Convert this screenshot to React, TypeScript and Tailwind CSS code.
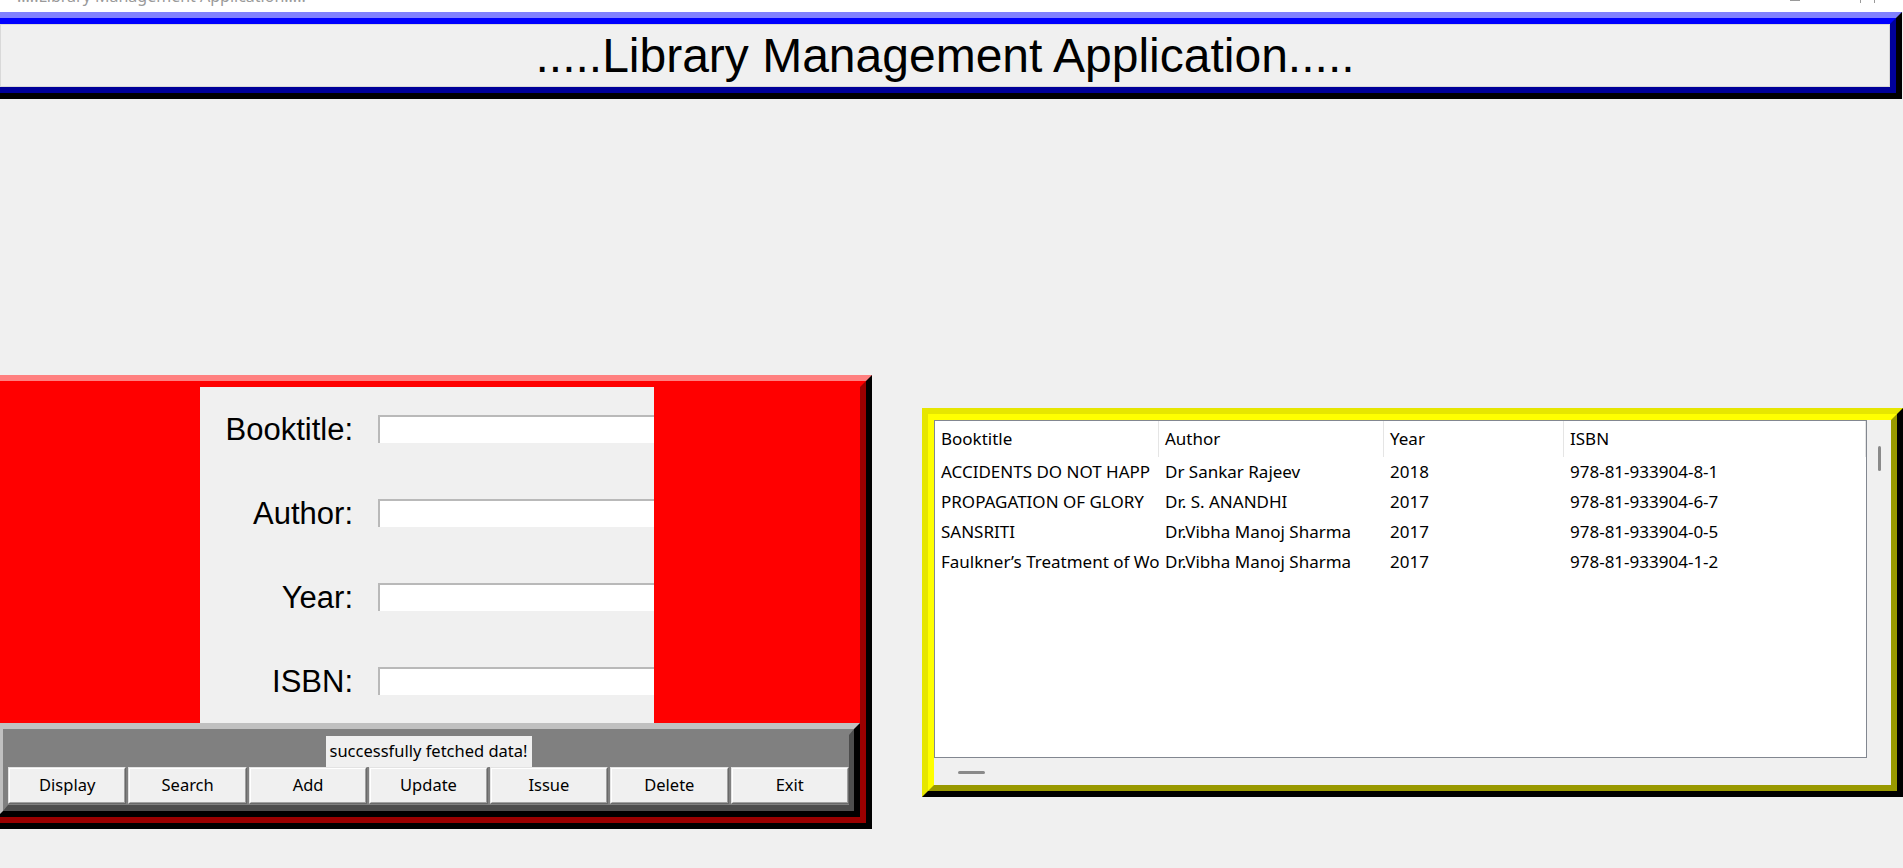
import React from 'react';

const fields = ['Booktitle:', 'Author:', 'Year:', 'ISBN:'];

const actions = ['Display', 'Search', 'Add', 'Update', 'Issue', 'Delete', 'Exit'];

const columns = [
  { name: 'Booktitle', width: 'w-[224px]' },
  { name: 'Author', width: 'w-[225px]' },
  { name: 'Year', width: 'w-[180px]' },
  { name: 'ISBN', width: 'flex-1' },
];

const books = [
  ['ACCIDENTS DO NOT HAPP', 'Dr Sankar Rajeev', '2018', '978-81-933904-8-1'],
  ['PROPAGATION OF GLORY', 'Dr. S. ANANDHI', '2017', '978-81-933904-6-7'],
  ['SANSRITI', 'Dr.Vibha Manoj Sharma', '2017', '978-81-933904-0-5'],
  ['Faulkner’s Treatment of Wo', 'Dr.Vibha Manoj Sharma', '2017', '978-81-933904-1-2'],
];

function WindowBar() {
  return (
    <div className="h-[12px] bg-white overflow-hidden flex items-start">
      <div className="ml-[17px] mt-[-12px] text-[16px] leading-none text-[#9a9a9a] whitespace-nowrap">
        .....Library Management Application.....
      </div>
      <div className="ml-auto flex items-start mr-[28px]">
        <div className="w-[10px] h-[1px] bg-[#9a9a9a]" />
        <div className="ml-[60px] w-[15px] h-[3px] border-x border-[#9a9a9a]" />
      </div>
    </div>
  );
}

function TitleBanner() {
  return (
    <div className="ml-[-12px] w-[1914px] border-[6px] border-t-[#8080ff] border-l-[#8080ff] border-r-black border-b-black">
      <div className="border-[6px] border-t-[#0000ff] border-l-[#0000ff] border-r-[#000099] border-b-[#000099]">
        <div className="h-[63px] bg-[#f0f0f0] border border-[#d9d9d9] flex items-center justify-center font-['Liberation_Sans',Arial,sans-serif] text-[48px] leading-none text-black">
          .....Library Management Application.....
        </div>
      </div>
    </div>
  );
}

function BookForm() {
  return (
    <div className="flex justify-center pr-[3px]">
      <div className="w-[454px] h-[336px] bg-[#f0f0f0] grid grid-cols-[178px_276px] grid-rows-4 overflow-hidden font-['Liberation_Sans',Arial,sans-serif]">
        {fields.map((f) => (
          <React.Fragment key={f}>
            <div className="flex items-center justify-end pr-[25px] text-[31px] leading-none text-black">{f}</div>
            <div className="flex items-center">
              <div className="h-[28px] w-full bg-white border-t-2 border-l-2 border-[#b9b9b9]" />
            </div>
          </React.Fragment>
        ))}
      </div>
    </div>
  );
}

function ButtonBar() {
  return (
    <div className="border-[6px] border-t-[#c0c0c0] border-l-[#c0c0c0] border-r-black border-b-black">
      <div className="border-y-[6px] border-x-[5px] border-t-[#808080] border-l-[#808080] border-r-[#4d4d4d] border-b-[#4d4d4d] bg-[#808080] flex flex-col items-center pt-[1px] pb-[1px]">
        <div className="h-[31px] px-[4px] bg-[#f0f0f0] flex items-center text-[16.5px] text-black">
          successfully fetched data!
        </div>
        <div className="w-full h-[37px] flex gap-[2px]">
          {actions.map((a) => (
            <button
              key={a}
              className="flex-1 border border-t-[#e3e3e3] border-l-[#e3e3e3] border-r-[#696969] border-b-[#696969]"
            >
              <div className="h-full border border-t-white border-l-white border-r-[#a0a0a0] border-b-[#a0a0a0] bg-[#f0f0f0] flex items-center justify-center text-[16.5px] text-black">
                {a}
              </div>
            </button>
          ))}
        </div>
      </div>
    </div>
  );
}

function BookTable() {
  return (
    <div className="border-[6px] border-t-[#e6e600] border-l-[#e6e600] border-r-black border-b-black">
      <div className="border-[6px] border-t-[#ffff00] border-l-[#ffff00] border-r-[#999900] border-b-[#999900] bg-[#f0f0f0]">
        <div className="flex h-[338px]">
          <div className="w-[933px] border border-[#828790] bg-white flex flex-col text-[17px] text-black">
            <div className="h-[36px] flex">
              {columns.map((c) => (
                <div key={c.name} className={`${c.width} border-r border-[#e5e5e5] pl-[6px] flex items-center`}>
                  {c.name}
                </div>
              ))}
            </div>
            {books.map((b) => (
              <div key={b[3]} className="h-[30px] flex">
                {b.map((cell, i) => (
                  <div key={i} className={`${columns[i].width} pl-[6px] flex items-center whitespace-nowrap overflow-hidden`}>
                    {cell}
                  </div>
                ))}
              </div>
            ))}
          </div>
          <div className="w-[24px] flex flex-col">
            <div className="mt-[26px] ml-[11px] w-[3px] h-[25px] rounded-full bg-[#8a8a8a]" />
          </div>
        </div>
        <div className="h-[27px] flex">
          <div className="w-[933px] flex items-start">
            <div className="mt-[13px] ml-[24px] w-[27px] h-[3px] rounded-full bg-[#8a8a8a]" />
          </div>
        </div>
      </div>
    </div>
  );
}

export default function App() {
  return (
    <div className="w-[1903px] h-[868px] overflow-hidden bg-[#f0f0f0] font-['Noto_Sans',sans-serif]">
      <WindowBar />
      <TitleBanner />
      <div className="mt-[276px] flex items-center">
        <div className="ml-[-15px] w-[887px] shrink-0 border-[6px] border-t-[#ff8080] border-l-[#ff8080] border-r-black border-b-black">
          <div className="border-[6px] border-t-[#ff0000] border-l-[#ff0000] border-r-[#990000] border-b-[#990000] bg-[#ff0000]">
            <BookForm />
            <ButtonBar />
          </div>
        </div>
        <div className="ml-[50px] w-[981px] shrink-0">
          <BookTable />
        </div>
      </div>
    </div>
  );
}
